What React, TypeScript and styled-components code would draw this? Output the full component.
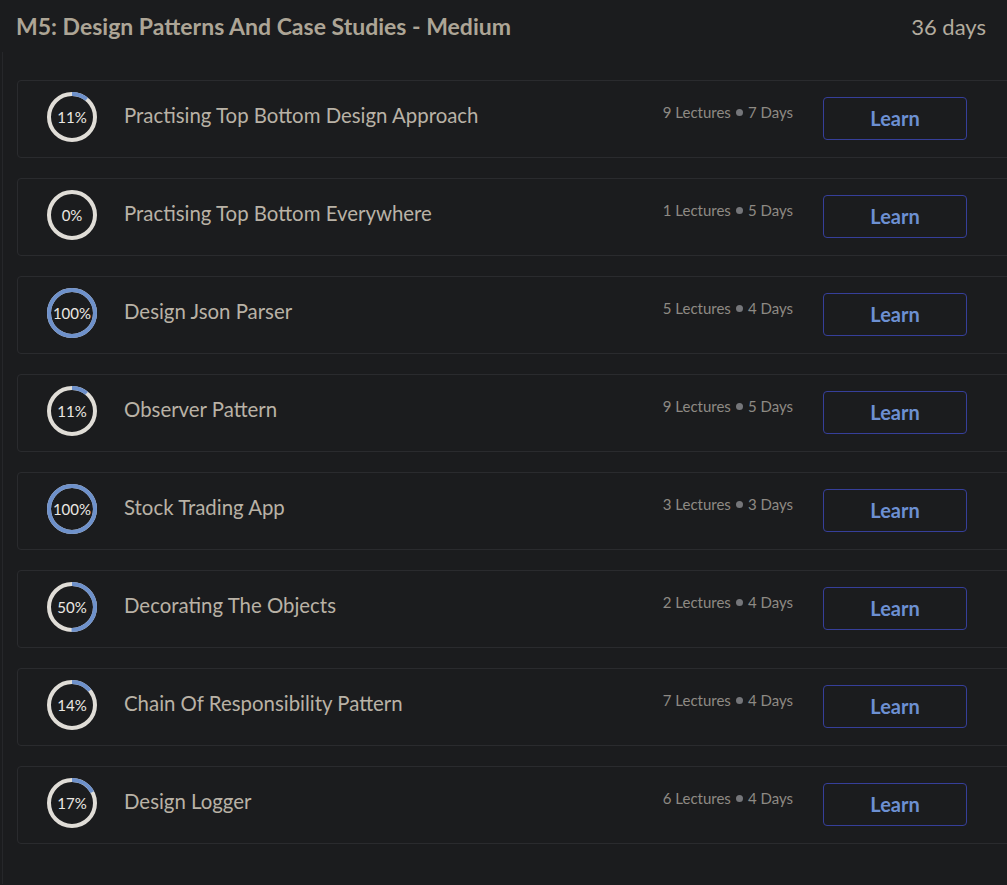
import { createGlobalStyle } from "styled-components";
import styled from "styled-components";

const GlobalStyle = createGlobalStyle`
  html, body {
    margin: 0;
    padding: 0;
    background: #1b1c1e;
    overflow: hidden;
  }
  body {
    font-family: Lato, "Open Sans", sans-serif;
  }
`;

const Page = styled.div`
  width: 1040px;
  min-height: 885px;
  background: #1b1c1e;
`;

const Header = styled.div`
  display: flex;
  align-items: center;
  justify-content: space-between;
  width: 1007px;
  box-sizing: border-box;
  height: 52px;
  padding: 0 21px 0 16px;
`;

const Title = styled.h2`
  margin: 0;
  font-size: 23px;
  font-weight: 700;
  color: #ada596;
`;

const Duration = styled.span`
  font-size: 22px;
  color: #b3ac9f;
`;

const List = styled.div`
  display: flex;
  flex-direction: column;
  gap: 20px;
  margin-left: 2px;
  padding: 28px 0 40px 14px;
  border-left: 1px solid #26272a;
`;

const Card = styled.div`
  display: flex;
  align-items: center;
  width: 1000px;
  height: 78px;
  box-sizing: border-box;
  padding: 0 49px 0 29px;
  border: 1px solid #2a2b2e;
  border-radius: 4px;
`;

const RingWrap = styled.div`
  position: relative;
  width: 50px;
  height: 50px;
  flex-shrink: 0;
  margin-top: -5px;
`;

const RingLabel = styled.span`
  position: absolute;
  inset: 0;
  display: flex;
  align-items: center;
  justify-content: center;
  font-size: 15px;
  color: #ebe8e3;
`;

const Name = styled.div`
  flex: 1;
  margin-left: 27px;
  margin-top: -8px;
  font-size: 20.4px;
  color: #b9b2a6;
`;

const Meta = styled.div`
  display: flex;
  align-items: center;
  gap: 5px;
  margin-top: -14px;
  font-size: 15px;
  color: #8e8a84;
`;

const Dot = styled.span`
  width: 7px;
  height: 7px;
  border-radius: 50%;
  background: #75767a;
`;

const LearnButton = styled.button`
  margin-left: 30px;
  margin-top: -2px;
  flex-shrink: 0;
  width: 144px;
  height: 43px;
  background: transparent;
  border: 1px solid #363f9a;
  border-radius: 4px;
  font-family: Lato, "Open Sans", sans-serif;
  font-size: 20px;
  font-weight: 700;
  color: #6d90d2;
  cursor: pointer;
`;

interface Lesson {
  title: string;
  percent: number;
  lectures: number;
  days: number;
}

const lessons: Lesson[] = [
  { title: "Practising Top Bottom Design Approach", percent: 11, lectures: 9, days: 7 },
  { title: "Practising Top Bottom Everywhere", percent: 0, lectures: 1, days: 5 },
  { title: "Design Json Parser", percent: 100, lectures: 5, days: 4 },
  { title: "Observer Pattern", percent: 11, lectures: 9, days: 5 },
  { title: "Stock Trading App", percent: 100, lectures: 3, days: 3 },
  { title: "Decorating The Objects", percent: 50, lectures: 2, days: 4 },
  { title: "Chain Of Responsibility Pattern", percent: 14, lectures: 7, days: 4 },
  { title: "Design Logger", percent: 17, lectures: 6, days: 4 },
];

const Ring = ({ percent }: { percent: number }) => {
  const r = 23;
  const c = 2 * Math.PI * r;
  return (
    <RingWrap>
      <svg width="50" height="50" viewBox="0 0 50 50">
        <circle cx="25" cy="25" r={r} fill="none" stroke="#e0ddd7" strokeWidth="4" />
        <circle
          cx="25"
          cy="25"
          r={r}
          fill="none"
          stroke="#6e91cb"
          strokeWidth="4"
          strokeDasharray={`${(c * percent) / 100} ${c}`}
          transform="rotate(-90 25 25)"
        />
      </svg>
      <RingLabel>{percent}%</RingLabel>
    </RingWrap>
  );
};

export default function App() {
  return (
    <Page>
      <GlobalStyle />
      <Header>
        <Title>M5: Design Patterns And Case Studies - Medium</Title>
        <Duration>36 days</Duration>
      </Header>
      <List>
        {lessons.map((l) => (
          <Card key={l.title}>
            <Ring percent={l.percent} />
            <Name>{l.title}</Name>
            <Meta>
              {l.lectures} Lectures <Dot /> {l.days} Days
            </Meta>
            <LearnButton>Learn</LearnButton>
          </Card>
        ))}
      </List>
    </Page>
  );
}
